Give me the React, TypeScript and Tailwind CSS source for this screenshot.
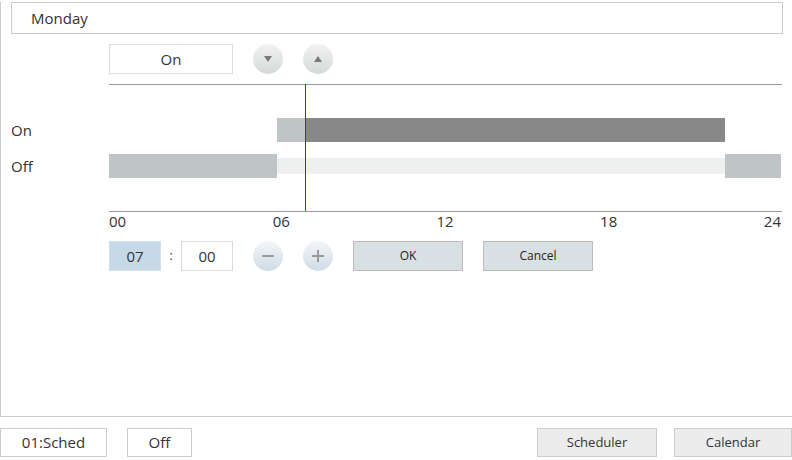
const font = { fontFamily: '"Open Sans", "Noto Sans", sans-serif' }

function RoundBtn({ kind }: { kind: 'down' | 'up' | 'minus' | 'plus' }) {
  const blue = kind === 'minus' || kind === 'plus'
  return (
    <div
      className={`w-[30px] h-[30px] rounded-full flex items-center justify-center ${
        blue ? 'bg-gradient-to-b from-[#f4f6f8] to-[#cfdbe7]' : 'bg-gradient-to-b from-[#f2f2f2] to-[#d6d8d9]'
      }`}
    >
      {kind === 'down' && (
        <svg width="10" height="8" viewBox="0 0 10 8"><path d="M1 1h8L5 7z" fill="#7a7a7a" /></svg>
      )}
      {kind === 'up' && (
        <svg width="10" height="8" viewBox="0 0 10 8"><path d="M1 7h8L5 1z" fill="#7a7a7a" /></svg>
      )}
      {kind === 'minus' && (
        <svg width="12" height="12" viewBox="0 0 12 12"><path d="M0 6h12" stroke="#9a9a9a" strokeWidth="2" /></svg>
      )}
      {kind === 'plus' && (
        <svg width="12" height="12" viewBox="0 0 12 12"><path d="M0 6h12M6 0v12" stroke="#9a9a9a" strokeWidth="2" /></svg>
      )}
    </div>
  )
}

export default function App() {
  return (
    <div className="w-[792px] h-[460px] bg-white text-[#333] overflow-hidden" style={font}>
      <div className="h-[415px] border-l border-b border-[#cccccc]">
        <div className="ml-[10px] mt-[2px] w-[772px] h-[32px] border border-[#cccccc] flex items-center pl-[19px] text-[15px]">
          Monday
        </div>

        <div className="flex items-center ml-[108px] mt-[10px] h-[30px]">
          <div className="w-[124px] h-[30px] border border-[#dddddd] flex items-center justify-center text-[15px]">
            On
          </div>
          <div className="ml-[20px]"><RoundBtn kind="down" /></div>
          <div className="ml-[20px]"><RoundBtn kind="up" /></div>
        </div>

        <div className="flex mt-[10px]">
          <div className="w-[108px] pl-[10px] text-[15px]">
            <div className="mt-[34px] h-[24px] flex items-center">On</div>
            <div className="mt-[12px] h-[24px] flex items-center">Off</div>
          </div>
          <div className="relative w-[673px]">
            <div className="h-px bg-[#999999]" />
            <div className="flex mt-[33px] h-[24px]">
              <div className="w-[168px]" />
              <div className="w-[28px] bg-[#bfc5c7]" />
              <div className="w-[420px] bg-[#888888]" />
            </div>
            <div className="flex mt-[12px] h-[24px] items-center">
              <div className="w-[168px] h-[24px] bg-[#bfc5c7]" />
              <div className="w-[448px] h-[16px] bg-[#eef0f0]" />
              <div className="w-[56px] h-[24px] bg-[#bfc5c7]" />
            </div>
            <div className="h-[33px]" />
            <div className="h-px bg-[#999999]" />
            <div className="absolute left-[196px] top-0 w-px h-[127px] bg-[#d40000]" />
            <div className="flex justify-between text-[15px] leading-[18px] w-[672px] h-[22px]">
              <span>00</span>
              <span>06</span>
              <span>12</span>
              <span>18</span>
              <span>24</span>
            </div>
          </div>
        </div>

        <div className="flex items-center ml-[108px] mt-[7px] h-[30px] text-[15px]">
          <div className="w-[52px] h-[30px] bg-[#c6d9e9] border border-[#d3e1ec] flex items-center justify-center">07</div>
          <div className="w-[20px] text-center text-[12px]">:</div>
          <div className="w-[52px] h-[30px] border border-[#dddddd] flex items-center justify-center">00</div>
          <div className="ml-[20px]"><RoundBtn kind="minus" /></div>
          <div className="ml-[20px]"><RoundBtn kind="plus" /></div>
          <div className="ml-[20px] w-[110px] h-[30px] bg-[#d9e0e3] border border-[#bbbbbb] flex items-center justify-center text-[12px] text-[#222]">
            OK
          </div>
          <div className="ml-[20px] w-[110px] h-[30px] bg-[#d9e0e3] border border-[#bbbbbb] flex items-center justify-center text-[12px] text-[#222]">
            Cancel
          </div>
        </div>
      </div>

      <div className="flex items-center mt-[11px] h-[29px] text-[15px]">
        <div className="w-[107px] h-[29px] border border-[#cccccc] flex items-center justify-center">01:Sched</div>
        <div className="ml-[20px] w-[65px] h-[29px] border border-[#cccccc] flex items-center justify-center">Off</div>
        <div className="ml-auto w-[120px] h-[29px] bg-[#ececec] border border-[#cccccc] flex items-center justify-center text-[13px]">
          Scheduler
        </div>
        <div className="ml-[17px] w-[118px] h-[29px] bg-[#ececec] border border-[#cccccc] flex items-center justify-center text-[13px]">
          Calendar
        </div>
      </div>
    </div>
  )
}
